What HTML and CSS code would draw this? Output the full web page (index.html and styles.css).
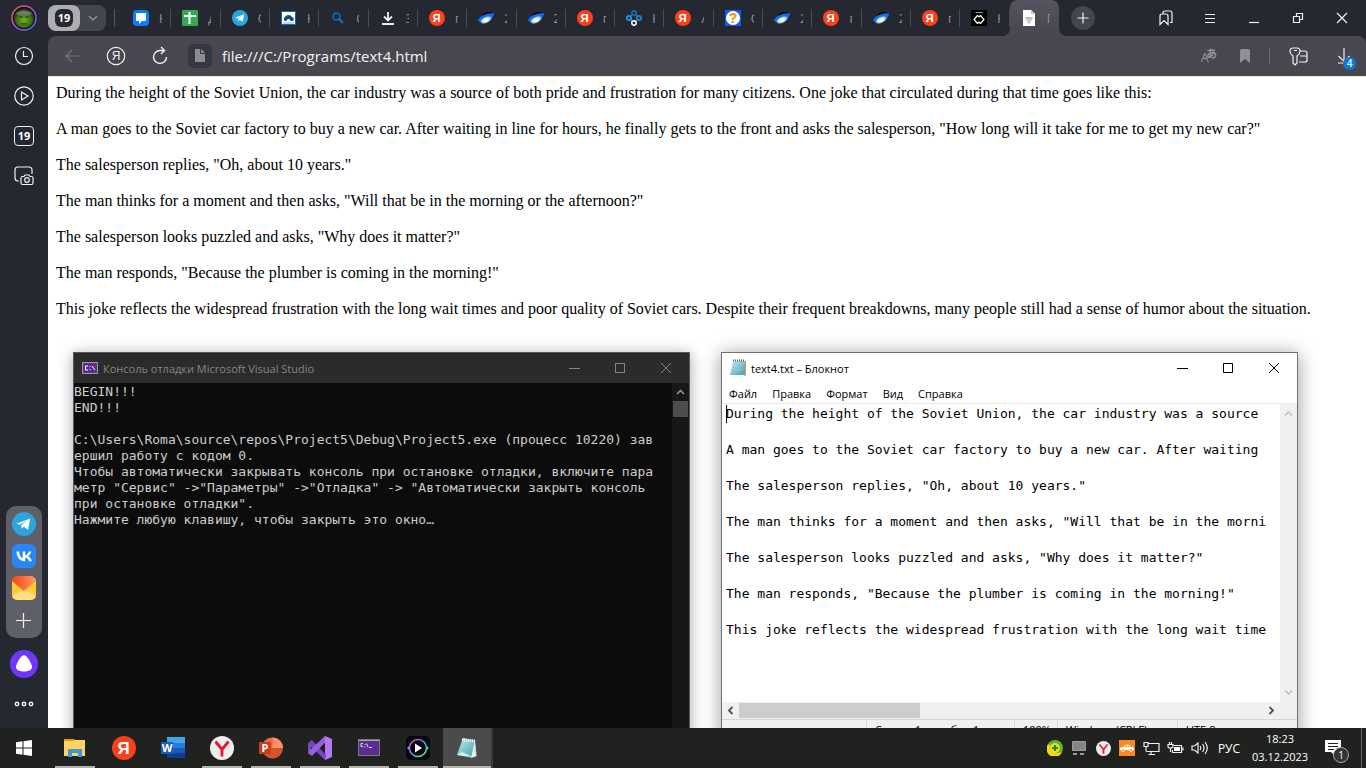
FILE: index.html
```html
<!DOCTYPE html>
<html lang="ru">
<head>
<meta charset="utf-8">
<title>text4.html</title>
<link rel="stylesheet" href="styles.css">
</head>
<body>
<svg class="defs" aria-hidden="true">
  <defs>
    <linearGradient id="ring" x1="0" y1="0" x2="1" y2="1"><stop offset="0" stop-color="#ff5a3c"/><stop offset=".4" stop-color="#c74be0"/><stop offset="1" stop-color="#3a6cff"/></linearGradient>
    <radialGradient id="avatar" cx=".5" cy=".6" r=".6"><stop offset="0" stop-color="#78b11c"/><stop offset=".55" stop-color="#3f7a14"/><stop offset="1" stop-color="#15260e"/></radialGradient>
    <linearGradient id="flap" x1="0" y1="0" x2="1" y2="0"><stop offset="0" stop-color="#ff3d10"/><stop offset="1" stop-color="#ff9b66"/></linearGradient>
    <radialGradient id="glow" cx=".5" cy=".5" r=".5"><stop offset="0" stop-color="#fff"/><stop offset=".5" stop-color="#e3f1ff"/><stop offset="1" stop-color="#fff" stop-opacity="0"/></radialGradient>
    <linearGradient id="rainbow" x1="0" y1="0" x2="1" y2="1"><stop offset="0" stop-color="#ff4fb0"/><stop offset=".35" stop-color="#a95cff"/><stop offset=".6" stop-color="#2fc4ff"/><stop offset="1" stop-color="#9bea3c"/></linearGradient>
    <linearGradient id="pad" x1="0" y1="0" x2="1" y2="1"><stop offset="0" stop-color="#c9eef3"/><stop offset="1" stop-color="#3f9fb0"/></linearGradient>
    <symbol id="ya" viewBox="0 0 24 24"><circle cx="12" cy="12" r="12" fill="#fc3f1d"/><text x="11.5" y="18" text-anchor="middle" class="ya-letter" fill="#fff">Я</text></symbol>
    <symbol id="tg" viewBox="0 0 24 24"><circle cx="12" cy="12" r="12" fill="#2ba5dc"/><path d="M4.500 11.800 18.200 6.400 16 17.800l-4.200-3-2.100 2-.5-3.500 6-5-7.500 4.500z" fill="#fff"/></symbol>
    <symbol id="space" viewBox="0 0 16 16"><path d="M3 7C5 2 11 1 15 3l-2 4z" fill="#000"/><path d="M0 10.500C1 5.500 11 2.500 16 3.500 15.500 10.500 5 15.500 0 10.500z" fill="#0872f5"/><ellipse cx="8" cy="10" rx="6.500" ry="3.500" transform="rotate(-25 8 10)" fill="url(#glow)"/></symbol>
    <symbol id="yb" viewBox="0 0 24 24"><circle cx="12" cy="12" r="12" fill="#ededed"/><path d="M5.500 5.500 12 13.500l6.500-8M12 13v7.500" fill="none" stroke="#e31b2c" stroke-width="2.800"/></symbol>
    <symbol id="notes" viewBox="0 0 24 24"><path d="M20 5l2 15-4 2z" fill="#b59a62"/><path d="M8 2l12 2-3 18-15-3z" fill="url(#pad)"/><path d="M20 4l1 16-5 2z" fill="#e9f1f1"/><path d="M7 4l13 1" stroke="#eee" stroke-width="3" stroke-dasharray="1 1"/><path d="M2 19l5-3 11 5z" fill="#d5eff2"/></symbol>
  </defs>
</svg>

<div class="desktop">
  <div class="workspace">
    <div class="browser">
      <nav class="sidebar" aria-label="Боковая панель">
        <button class="side-btn avatar" aria-label="Профиль"><svg width="26" height="26" viewBox="0 0 26 26"><circle cx="13" cy="13" r="12" fill="#15170f" stroke="url(#ring)" stroke-width="1.500"/><circle cx="13" cy="13" r="10" fill="url(#avatar)"/><path d="M5 8q8-5 16 0l-2 2H7z" fill="#6d7a66"/><path d="M8 12h4M14 12h4M10 19h6" stroke="#1d3a0c" stroke-width="1.200"/></svg></button>
        <button class="side-btn" aria-label="История"><svg width="20" height="20" viewBox="0 0 20 20" class="line"><circle cx="10" cy="10" r="8.500"/><path d="M9.500 5v5.500H14"/></svg></button>
        <button class="side-btn" aria-label="Видео"><svg width="20" height="20" viewBox="0 0 20 20" class="line"><circle cx="10" cy="10" r="9.200"/><path d="M7.500 6v8l6.500-4z"/></svg></button>
        <button class="side-btn" aria-label="Вкладки"><span class="count">19</span></button>
        <button class="side-btn" aria-label="Скриншот"><svg width="20" height="20" viewBox="0 0 20 20" class="line"><path d="M5 15H3.500Q1 14.500 1 12V4q0-3 3-3h11q3 0 3 3v4"/><path d="M7 12q0-1.500 1.500-1.500h1.500l1-1.500h4l1 1.500h1.500q1.500 0 1.500 1.500v5q0 1.500-1.500 1.500h-9Q7 18.500 7 17z"/><circle cx="13" cy="14" r="2.300"/></svg></button>
        <div class="messengers">
          <button class="side-app" aria-label="Telegram"><svg width="24" height="24"><use href="#tg"/></svg></button>
          <button class="side-app" aria-label="ВКонтакте"><svg width="24" height="24" viewBox="0 0 24 24"><rect width="24" height="24" rx="6" fill="#2787f5"/><path d="M13 17.200C7.800 17.200 4.700 13.600 4.500 7.600h2.700c.1 4.400 2 6.200 3.500 6.600V7.600h2.500v3.800c1.500-.2 3.100-1.900 3.600-3.800h2.500c-.4 2.300-2.100 4-3.300 4.700 1.200.6 3.100 2 3.900 4.900h-2.700c-.6-1.800-2-3.200-4-3.400v3.400z" fill="#fff"/></svg></button>
          <button class="side-app" aria-label="Почта"><svg width="24" height="24" viewBox="0 0 24 24"><rect width="24" height="24" rx="6" fill="#ffcc33"/><path d="M0 20 12 13l12 7q-1 4-6 4H6q-5 0-6-4z" fill="#ffdf80"/><path d="M0 5q1-5 6-5h12q5 0 6 5L12 15z" fill="url(#flap)"/></svg></button>
          <button class="side-app" aria-label="Добавить"><svg width="24" height="24" viewBox="0 0 24 24" class="line"><path d="M11.500 5v15M4 12.500h15"/></svg></button>
        </div>
        <button class="side-btn alice" aria-label="Алиса"><svg width="28" height="28" viewBox="0 0 28 28"><circle cx="14" cy="14" r="14" fill="#7137f9"/><path d="M14 5c3 0 8 9 8 12 0 6-16 6-16 0 0-3 5-12 8-12z" fill="#fff"/></svg></button>
        <button class="side-btn" aria-label="Ещё"><svg width="20" height="6" viewBox="0 0 20 6" class="line dots"><circle cx="3" cy="3" r="1.700"/><circle cx="10" cy="3" r="1.700"/><circle cx="17" cy="3" r="1.700"/></svg></button>
      </nav>

      <div class="main">
        <header class="tabstrip">
          <div class="tab-group">
            <button class="group-count" aria-label="19 вкладок"><span>19</span></button>
            <button class="group-more" aria-label="Список"><svg width="10" height="6" viewBox="0 0 10 6"><path d="M1 1l4 4 4-4" fill="none" stroke="#919198" stroke-width="1.300"/></svg></button>
          </div>
          <div class="tabs">
            <button class="tab"><svg width="16" height="16" viewBox="0 0 16 16"><rect width="16" height="16" rx="4" fill="#0a7cff"/><path d="M4 3h8q1 0 1 1v6q0 1-1 1H9l-3 3v-3H4q-1 0-1-1V4q0-1 1-1z" fill="#fff"/></svg><span>Н</span></button>
            <button class="tab"><svg width="16" height="16" viewBox="0 0 16 16"><rect width="16" height="16" rx="1" fill="#34a853"/><path d="M7.500 2v12M2 6h12" stroke="#fff" stroke-width="2"/></svg><span>Д</span></button>
            <button class="tab"><svg width="16" height="16"><use href="#tg"/></svg><span>О</span></button>
            <button class="tab"><svg width="16" height="16" viewBox="0 0 16 16"><rect x=".5" y="1.500" width="14" height="13" fill="#fff" stroke="#1767b5"/><path d="M4 11a3 2.500 0 0 1 0-4 4 4 0 0 1 7 0 3 2.500 0 0 1 1 4H9.500a2 2 0 0 0-4 0z" fill="#17457f"/><path d="M2 13h11" stroke="#6ab5e8"/></svg><span>Н</span></button>
            <button class="tab"><svg width="16" height="16" viewBox="0 0 16 16"><circle cx="6.500" cy="6.500" r="3.500" fill="none" stroke="#0b74c8" stroke-width="1.600"/><path d="M9 9l4 4" stroke="#0b74c8" stroke-width="2"/></svg><span>С</span></button>
            <button class="tab"><svg width="16" height="16" viewBox="0 0 16 16"><path d="M8 2v7M4 6.500l4 4 4-4M2 14h12" fill="none" stroke="#eee" stroke-width="1.800"/></svg><span>3</span></button>
            <button class="tab"><svg width="16" height="16"><use href="#ya"/></svg><span>п</span></button>
            <button class="tab"><svg width="16" height="16"><use href="#space"/></svg><span>2</span></button>
            <button class="tab"><svg width="16" height="16"><use href="#space"/></svg><span>2</span></button>
            <button class="tab"><svg width="16" height="16"><use href="#ya"/></svg><span>п</span></button>
            <button class="tab"><svg width="16" height="16" viewBox="0 0 16 16"><g fill="none" stroke-width="1.700"><path d="M6.500 4.500l-2 2M9.500 4.500l2 2M4.500 9.500l2 2M11.500 9.500l-2 2" stroke="#168bd0" stroke-width="1"/><circle cx="8" cy="3" r="2.200" stroke="#1768c2"/><circle cx="3" cy="8" r="2.200" stroke="#1aa0df"/><circle cx="13" cy="8" r="2.200" stroke="#1688e0"/><circle cx="8" cy="13" r="2.200" stroke="#eee"/></g></svg><span>Н</span></button>
            <button class="tab"><svg width="16" height="16"><use href="#ya"/></svg><span>А</span></button>
            <button class="tab"><svg width="16" height="16" viewBox="0 0 16 16"><rect width="16" height="16" fill="#0a5cff"/><circle cx="8" cy="8" r="7" fill="#fff"/><text x="8" y="13" text-anchor="middle" class="question">?</text></svg><span>О</span></button>
            <button class="tab"><svg width="16" height="16"><use href="#space"/></svg><span>2</span></button>
            <button class="tab"><svg width="16" height="16"><use href="#ya"/></svg><span>п</span></button>
            <button class="tab"><svg width="16" height="16"><use href="#space"/></svg><span>2</span></button>
            <button class="tab"><svg width="16" height="16"><use href="#ya"/></svg><span>п</span></button>
            <button class="tab"><svg width="16" height="16" viewBox="0 0 16 16"><rect width="16" height="16" fill="#000"/><path d="M4.500 2.500h7" stroke="#999"/><path d="M6.500 5.500 3 9.500l3.500 4M9.500 5.500l3.500 4-3.500 4M6.500 5.500 8 7l1.500-1.500M6.500 13.500 8 12l1.500 1.500" fill="none" stroke="#fff" stroke-width="1.200"/></svg><span>Н</span></button>
            <button class="tab active"><svg width="16" height="16" viewBox="0 0 16 16"><path d="M2 0h8l4 4v12H2z" fill="#fff"/><path d="M10 0v4h4z" fill="#c9c9c9"/><path d="M4.500 7.500h7L8 13.500zM6.500 8.500h3L8 11z" fill="none" stroke="#b5b5b5"/></svg><span>П</span></button>
          </div>
          <div class="window-tools">
            <button class="new-tab" aria-label="Новая вкладка"><svg width="12" height="12" viewBox="0 0 12 12" class="line"><path d="M6 .5v11M.5 6h11"/></svg></button>
            <button class="tool" aria-label="Закладки"><svg width="14" height="16" viewBox="0 0 14 16" class="line"><path d="M1 14.500V6q0-2 2-2h4q2 0 2 2v8.500l-4-4zM4 4V3q0-2 2-2h5q2 0 2 2v9.500h-2"/></svg></button>
            <button class="tool" aria-label="Меню"><svg width="10" height="11" viewBox="0 0 10 11" class="line"><path d="M0 1.500h10M0 5.500h10M0 9.500h10"/></svg></button>
            <button class="tool" aria-label="Свернуть"><svg width="10" height="11" viewBox="0 0 10 11" class="line"><path d="M0 9.500h10"/></svg></button>
            <button class="tool" aria-label="Восстановить"><svg width="12" height="12" viewBox="0 0 12 12" class="line"><path d="M1.500 4.500h6v6h-6zM4.500 4.500v-3h6v6h-3"/></svg></button>
            <button class="tool" aria-label="Закрыть"><svg width="12" height="12" viewBox="0 0 12 12" class="line"><path d="M1 1l10 10M11 1 1 11"/></svg></button>
          </div>
        </header>

        <div class="toolbar">
          <button class="nav-btn" aria-label="Назад"><svg width="16" height="14" viewBox="0 0 16 14" fill="none" stroke="#77767e" stroke-width="1.200"><path d="M15 7H2M8 1 2 7l6 6"/></svg></button>
          <button class="nav-btn" aria-label="Яндекс"><svg width="20" height="20" viewBox="0 0 20 20" class="line"><circle cx="10" cy="10" r="8.700"/></svg><span class="ya-outline">Я</span></button>
          <button class="nav-btn" aria-label="Обновить"><svg width="18" height="20" viewBox="0 0 18 20" class="line reload"><path d="M15.500 11A6.500 6.500 0 1 1 9 4.500h4M10 1l3.500 3.500L10 8"/></svg></button>
          <span class="page-badge"><svg width="12" height="14" viewBox="0 0 12 14"><path d="M1 0h5v5h5v8H1zM7 0l4 4H7z" fill="#8a8d94"/></svg></span>
          <input class="address" aria-label="Адрес" value="file:///C:/Programs/text4.html">
          <button class="nav-icon" aria-label="Перевести"><svg width="18" height="16" viewBox="0 0 18 16"><text x="1" y="14" class="tr-a">A</text><text x="6" y="10" class="tr-b">あ</text></svg></button>
          <button class="nav-icon" aria-label="В закладки"><svg width="10" height="14" viewBox="0 0 10 14"><path d="M0 2q0-2 2-2h6q2 0 2 2v12L5 10l-5 4z" fill="#918f96"/></svg></button>
          <span class="divider"></span>
          <button class="nav-icon key" aria-label="Пароли"><svg width="19" height="19" viewBox="0 0 19 19" class="line"><path d="M4 9Q1 7 1 4.500 1 1 4 1h4q3 0 3 3.500Q11 7 8 9v7l-2 2-2-2zM5 3.500h3M11 4h5q2 0 2 2v7q0 2-2 2h-6M11 9h7"/></svg></button>
          <button class="nav-icon download" aria-label="Загрузки"><svg width="16" height="18" viewBox="0 0 16 18" class="line"><path d="M8 1v13M2.500 9 8 14.500 13.500 9M2 16h6"/></svg><span class="badge">4</span></button>
        </div>

        <main class="page">
          During the height of the Soviet Union, the car industry was a source of both pride and frustration for many citizens. One joke that circulated during that time goes like this:<br><br>
          A man goes to the Soviet car factory to buy a new car. After waiting in line for hours, he finally gets to the front and asks the salesperson, "How long will it take for me to get my new car?"<br><br>
          The salesperson replies, "Oh, about 10 years."<br><br>
          The man thinks for a moment and then asks, "Will that be in the morning or the afternoon?"<br><br>
          The salesperson looks puzzled and asks, "Why does it matter?"<br><br>
          The man responds, "Because the plumber is coming in the morning!"<br><br>
          This joke reflects the widespread frustration with the long wait times and poor quality of Soviet cars. Despite their frequent breakdowns, many people still had a sense of humor about the situation.
        </main>
      </div>
    </div>

    <section class="window console" aria-label="Консоль отладки">
      <div class="titlebar">
        <svg width="16" height="12" viewBox="0 0 16 12"><rect x=".5" y=".5" width="15" height="11" fill="#5c2d91" stroke="#9b9b9b"/><path d="M6 4H3.500v4H6M8 4v1M8 7v1M10 4l3 4" fill="none" stroke="#fff"/></svg>
        <h2 class="title">Консоль отладки Microsoft Visual Studio</h2>
        <button class="win-btn" aria-label="Свернуть"><svg width="12" height="12" viewBox="0 0 12 12"><path d="M1 6.500h11"/></svg></button>
        <button class="win-btn" aria-label="Развернуть"><svg width="12" height="12" viewBox="0 0 12 12"><path d="M1.500 1.500h9v9h-9z"/></svg></button>
        <button class="win-btn" aria-label="Закрыть"><svg width="12" height="12" viewBox="0 0 12 12"><path d="M1 1l10 10M11 1 1 11"/></svg></button>
      </div>
      <div class="console-body">
<pre class="output">BEGIN!!!
END!!!

C:\Users\Roma\source\repos\Project5\Debug\Project5.exe (процесс 10220) зав
ершил работу с кодом 0.
Чтобы автоматически закрывать консоль при остановке отладки, включите пара
метр "Сервис" -&gt;"Параметры" -&gt;"Отладка" -&gt; "Автоматически закрыть консоль
при остановке отладки".
Нажмите любую клавишу, чтобы закрыть это окно…</pre>
        <div class="console-scroll"><svg width="9" height="6" viewBox="0 0 9 6"><path d="M1 5l3.500-3.500L8 5" fill="none" stroke="#999" stroke-width="1.500"/></svg><span class="thumb"></span></div>
      </div>
    </section>

    <section class="window notepad" aria-label="Блокнот">
      <div class="titlebar">
        <svg width="16" height="18" viewBox="0 0 16 18"><path d="M13 2h3v14l-2 1z" fill="#b59a62"/><path d="M3 2h12l-1 14H0z" fill="url(#pad)"/><path d="M3 5h10M3 8h10M2 11h10" stroke="#8fcfda" stroke-width=".7"/><path d="M3 1.500h12" stroke="#56656a" stroke-width="2" stroke-dasharray="1 1"/></svg>
        <h2 class="title">text4.txt – Блокнот</h2>
        <button class="win-btn" aria-label="Свернуть"><svg width="12" height="12" viewBox="0 0 12 12"><path d="M1 6.500h11"/></svg></button>
        <button class="win-btn" aria-label="Развернуть"><svg width="12" height="12" viewBox="0 0 12 12"><path d="M1.500 1.500h9v9h-9z"/></svg></button>
        <button class="win-btn" aria-label="Закрыть"><svg width="12" height="12" viewBox="0 0 12 12"><path d="M1 1l10 10M11 1 1 11"/></svg></button>
      </div>
      <div class="menubar"><button>Файл</button><button>Правка</button><button>Формат</button><button>Вид</button><button>Справка</button></div>
      <div class="editor-row">
        <textarea class="editor" aria-label="Текст" wrap="off" spellcheck="false">During the height of the Soviet Union, the car industry was a source

A man goes to the Soviet car factory to buy a new car. After waiting

The salesperson replies, "Oh, about 10 years."

The man thinks for a moment and then asks, "Will that be in the morni

The salesperson looks puzzled and asks, "Why does it matter?"

The man responds, "Because the plumber is coming in the morning!"

This joke reflects the widespread frustration with the long wait time</textarea>
        <span class="caret"></span>
        <div class="vscroll"><svg width="9" height="7" viewBox="0 0 9 7"><path d="M1 5.500 4.500 2 8 5.500"/></svg><svg width="9" height="7" viewBox="0 0 9 7"><path d="M1 1.500 4.500 5 8 1.500"/></svg></div>
      </div>
      <div class="hscroll"><svg width="7" height="9" viewBox="0 0 7 9"><path d="M5.500 1 2 4.500 5.500 8"/></svg><span class="thumb"></span><svg width="7" height="9" viewBox="0 0 7 9"><path d="M1.500 1 5 4.500 1.500 8"/></svg></div>
      <div class="statusbar"><span class="pos">Строка 1, столбец 1</span><span class="zoom">100%</span><span class="eol">Windows (CRLF)</span><span class="enc">UTF-8</span></div>
    </section>
  </div>

  <footer class="taskbar">
    <button class="start" aria-label="Пуск"><svg width="16" height="16" viewBox="0 0 16 16"><path d="M0 2.200 6.500 1.300v6.200H0zM7.500 1.200 16 0v7.500H7.500zM0 8.500h6.500v6.200L0 13.800zM7.500 8.500H16V16l-8.500-1.200z" fill="#fff"/></svg></button>
    <div class="tasks">
      <button class="task open" aria-label="Проводник"><svg width="24" height="24" viewBox="0 0 24 24"><path d="M1 3h9l2 1h10v16H1z" fill="#ffd45e"/><path d="M1 3h9l1 2H1z" fill="#e5a000"/><path d="M5 21v-8h14v8h-4v-4H9v4z" fill="#3b99db"/></svg></button>
      <button class="task" aria-label="Яндекс"><svg width="24" height="24"><use href="#ya"/></svg></button>
      <button class="task" aria-label="Word"><svg width="24" height="24" viewBox="0 0 24 24"><path d="M6 1h18v6H6z" fill="#41a5ee"/><path d="M6 7h18v5H6z" fill="#2b7cd3"/><path d="M6 12h18v5H6z" fill="#185abd"/><path d="M6 17h18v5H6z" fill="#103f91"/><rect y="6" width="12" height="12" fill="#185abd"/><text x="6" y="16" text-anchor="middle" class="office">W</text></svg></button>
      <button class="task open" aria-label="Яндекс Браузер"><svg width="24" height="24"><use href="#yb"/></svg></button>
      <button class="task open" aria-label="PowerPoint"><svg width="24" height="24" viewBox="0 0 24 24"><circle cx="13.500" cy="12" r="10.500" fill="#d35230"/><path d="M13.500 1.500A10.500 10.500 0 0 0 3 12h10.500z" fill="#ed6c47"/><path d="M13.500 1.500V12H24A10.500 10.500 0 0 0 13.500 1.500z" fill="#ff8f6b"/><rect y="6" width="12" height="12" fill="#c43e1c"/><text x="6" y="16" text-anchor="middle" class="office">P</text></svg></button>
      <button class="task open" aria-label="Visual Studio"><svg width="24" height="24" viewBox="0 0 24 24"><path d="M17 0l7 3v18l-7 3z" fill="#b179f1"/><path d="M1 6l3-2 14 15-1 5L1 9z" fill="#7b3fc4"/><path d="M0 7l3 1.500v8L0 18z" fill="#7252aa"/><path d="M17 0v6.500L4 20l-3-2v-3z" fill="#9a5ee0"/></svg></button>
      <button class="task open" aria-label="Консоль"><svg width="24" height="24" viewBox="0 0 24 24"><rect x="1.500" y="3.500" width="21" height="16" fill="#5c2d91" stroke="#777"/><path d="M2 4.500h20" stroke="#aaa"/><path d="M6 7.500H4v3h2M8 8v1M8 10.500v1M9.500 7.500l1.500 3.500M12 11.500h3" fill="none" stroke="#ddd"/></svg></button>
      <button class="task open" aria-label="Плеер"><svg width="24" height="24" viewBox="0 0 24 24"><rect width="24" height="24" rx="5" fill="#07070b"/><circle cx="12" cy="12" r="8.500" fill="none" stroke="url(#rainbow)" stroke-width="1.500"/><path d="M1 12l2-2v4zM23 12l-2-2v4z" fill="#41bde8"/><path d="M9 7.500v9l7-4.500z" fill="#fff"/></svg></button>
      <button class="task open current" aria-label="Блокнот"><svg width="24" height="24"><use href="#notes"/></svg></button>
    </div>
    <div class="tray">
      <button aria-label="Антивирус"><svg width="16" height="16" viewBox="0 0 16 16"><circle cx="8" cy="8" r="8" fill="#5cb531"/><path d="M1 4.500A8 8 0 1 0 15 12q-4 2-8 0T3 5z" fill="#f3d818"/><circle cx="8" cy="8" r="5" fill="#f3d818"/><path d="M8 5v6M5 8h6" stroke="#238a2c" stroke-width="2"/></svg></button>
      <button aria-label="Сенсорная панель"><svg width="16" height="16" viewBox="0 0 16 16"><path d="M1.500 1.500h13v9h-13z" fill="#858585" stroke="#999"/><path d="M2 14h4M9 14h4" stroke="#999" stroke-width="2"/></svg></button>
      <button aria-label="Браузер"><svg width="15" height="15"><use href="#yb"/></svg></button>
      <button aria-label="Такси"><svg width="16" height="16" viewBox="0 0 16 16"><rect width="16" height="16" fill="#f68a1f"/><path d="M1 9q0-2 3-2 2-3 5-2.500 2 0 3 2.500 3 0 3 2v1H1z" fill="#fff"/><path d="M5 7q2-2 3-1.500V7zM9 5.500q1.500 0 2 1.500H9z" fill="#f68a1f"/><circle cx="4" cy="10" r="1.500" fill="#f68a1f" stroke="#fff"/><circle cx="12" cy="10" r="1.500" fill="#f68a1f" stroke="#fff"/></svg></button>
      <button aria-label="Сеть"><svg width="17" height="16" viewBox="0 0 17 16" class="line"><path d="M5 3.500h11v8H3.500M8 12v3M5.500 14.500H12M1 2.500h4v4H1zM3 6.500v5"/></svg></button>
      <button aria-label="Батарея"><svg width="17" height="16" viewBox="0 0 17 16" class="line"><path d="M7 5.500h7.500v7h-9V10M16 7.500v3M1 4.500h5v2q0 1.500-2.500 1.500T1 6.500zM2.500 2v2M4.500 2v2M3.500 8v4"/><path d="M7 7h6v4H7z" fill="#fff" stroke="none"/></svg></button>
      <button aria-label="Звук"><svg width="17" height="16" viewBox="0 0 17 16" class="line"><path d="M1 6h2.500L7 3v10L3.500 10H1zM9 6q1.500 2 0 4M11.500 4q3 4 0 8M14 2q4.500 6 0 12"/></svg></button>
      <button class="lang">РУС</button>
      <button class="clock"><span>18:23</span><span>03.12.2023</span></button>
      <button class="notify" aria-label="Уведомления"><svg width="16" height="16" viewBox="0 0 16 16"><path d="M0 0h16v12h-6v4l-4-4H0z" fill="#fff"/><path d="M3 3.500h10M3 6.500h10M3 9.500h6" stroke="#222"/></svg><span class="badge">1</span></button>
    </div>
  </footer>
</div>
</body>
</html>
```

FILE: styles.css
```css
* { box-sizing: border-box; }

body {
  margin: 0;
  font-family: "Open Sans", "Noto Sans", sans-serif;
  font-size: 12px;
  overflow: hidden;
}

button {
  margin: 0;
  padding: 0;
  border: 0;
  background: none;
  color: inherit;
  font: inherit;
  display: flex;
  align-items: center;
  justify-content: center;
}

svg { display: block; flex: none; }
.defs { position: absolute; width: 0; height: 0; }
.line { fill: none; stroke: #f0f0f0; stroke-width: 1.2; }
.dots { stroke-width: 1.5; }
.reload { stroke-width: 1.4; }
.ya-letter { font: 700 17px "Liberation Sans", sans-serif; }
.question { font: 700 14px "Liberation Sans", sans-serif; fill: #ff8a00; }
.office { font: 700 11px "Open Sans", sans-serif; fill: #fff; }
.tr-a { font: 12px "Open Sans", sans-serif; fill: #99989f; }
.tr-b { font: 700 11px "Noto Sans CJK JP", sans-serif; fill: #99989f; }

.desktop { height: 100vh; display: flex; flex-direction: column; }
.workspace { position: relative; flex: 1; min-height: 0; overflow: hidden; }
.browser { display: flex; height: 100%; background: #252731; }

/* Sidebar */
.sidebar {
  flex: none;
  width: 48px;
  display: flex;
  flex-direction: column;
  align-items: center;
}
.side-btn { width: 48px; height: 40px; }
.side-btn.avatar { height: 36px; }
.count {
  width: 20px;
  height: 20px;
  border: 1px solid #f0f0f0;
  border-radius: 4px;
  color: #fff;
  font-size: 11px;
  font-weight: 700;
  line-height: 18px;
  text-align: center;
}
.messengers {
  margin-top: auto;
  width: 36px;
  padding: 6px;
  display: flex;
  flex-direction: column;
  gap: 8px;
  border-radius: 10px;
  background: #5f5f68;
}
.side-btn.alice { height: 52px; }
.side-btn:last-child { margin-bottom: 10px; height: 28px; }

/* Tabs */
.main { flex: 1; min-width: 0; display: flex; flex-direction: column; }
.tabstrip { flex: none; height: 36px; display: flex; align-items: center; }
.tab-group {
  flex: none;
  width: 58px;
  height: 26px;
  display: flex;
  border-radius: 8px;
  background: #454550;
}
.group-count { width: 32px; height: 26px; border-radius: 8px; background: #aeaeb2; }
.group-count span {
  width: 18px;
  height: 18px;
  border-radius: 6px;
  background: #252731;
  color: #fff;
  font-size: 11px;
  font-weight: 700;
  line-height: 18px;
}
.group-more { flex: 1; }
.tabs { flex: 1; min-width: 0; height: 36px; margin-left: 8px; padding-left: 8px; display: flex; position: relative; }
.tabs::before { content: ""; position: absolute; left: 0; top: 9px; width: 1px; height: 18px; background: #565861; }
.tab {
  position: relative;
  flex: 1 1 0;
  min-width: 0;
  padding-left: 11px;
  justify-content: flex-start;
  gap: 10px;
  color: #94949a;
}
.tab span { width: 3px; overflow: hidden; text-align: left; }
.tab::after { content: ""; position: absolute; right: 0; top: 9px; width: 1px; height: 18px; background: #4a4c55; }
.tab.active { border-radius: 8px 8px 0 0; background: linear-gradient(#55545e, #484750); }
.tab.active::before, .tab.active::after {
  content: "";
  position: absolute;
  top: auto;
  bottom: 0;
  width: 8px;
  height: 8px;
}
.tab.active::before { left: -8px; background: radial-gradient(circle at 0 0, transparent 8px, #484750 8px); }
.tab.active::after { right: -8px; background: radial-gradient(circle at 100% 0, transparent 8px, #484750 8px); }
.window-tools { flex: none; display: flex; align-items: center; padding: 0 2px 0 12px; }
.new-tab { width: 24px; height: 24px; border-radius: 50%; background: #454550; margin-right: 49px; }
.tool { width: 44px; height: 36px; }

/* Address bar */
.toolbar {
  flex: none;
  height: 40px;
  padding-left: 2px;
  display: flex;
  align-items: center;
  border-radius: 8px 8px 0 0;
  background: #484750;
  color: #f0f0f0;
}
.nav-btn { position: relative; width: 44px; height: 40px; }
.ya-outline { position: absolute; inset: 0; font: 12px/40px "Liberation Sans", sans-serif; text-align: center; }
.page-badge {
  width: 24px;
  height: 24px;
  margin-left: 6px;
  display: flex;
  align-items: center;
  justify-content: center;
  border-radius: 5px;
  background: #363841;
}
.address {
  flex: 1;
  min-width: 0;
  height: 32px;
  padding: 0 10px;
  border: 0;
  outline: 0;
  background: none;
  color: #f3f3f3;
  font: 15px "Open Sans", sans-serif;
}
.nav-icon { position: relative; width: 36px; height: 40px; }
.divider { width: 1px; height: 16px; margin: 0 4px 0 6px; background: #6c6b73; }
.key { width: 48px; }
.download { width: 44px; }
.badge {
  position: absolute;
  border-radius: 50%;
  color: #fff;
  text-align: center;
}
.download .badge { right: 10px; bottom: 6px; width: 13px; height: 13px; background: #0a78dd; font-size: 10px; line-height: 13px; font-weight: 600; }

.page {
  flex: 1;
  min-height: 0;
  padding: 7px 8px;
  border-top: 1px solid #e6e6ea;
  background: #fff;
  color: #000;
  font: 16px/18px "Liberation Serif", "Times New Roman", serif;
}

/* Floating windows */
.window { position: absolute; top: 352px; display: flex; flex-direction: column; }
.titlebar { flex: none; height: 30px; display: flex; align-items: center; }
.title { flex: 1; margin: 0; font-size: 11px; font-weight: 400; }
.win-btn { width: 46px; height: 30px; }
.win-btn svg { fill: none; stroke: currentColor; stroke-width: 1; }
.titlebar .win-btn { margin-left: -5px; }
.titlebar .title + .win-btn { margin-left: 0; }

.console {
  left: 73px;
  width: 617px;
  bottom: -20px;
  border: 1px solid #5a5a5a;
  background: #0c0c0c;
  color: #ccc;
  box-shadow: 0 2px 14px rgba(0, 0, 0, .35);
}
.console .titlebar { padding-left: 8px; gap: 5px; background: #2b2b2b; color: #858585; }
.console-body { flex: 1; min-height: 0; display: flex; justify-content: space-between; }
.output { margin: 0; padding-top: 1px; font: 13px/16px "DejaVu Sans Mono", monospace; }
.console-scroll { flex: none; width: 17px; display: flex; flex-direction: column; align-items: center; padding-top: 6px; gap: 6px; background: #171717; }
.console-scroll .thumb { width: 15px; height: 16px; background: #4d4d4d; }

.notepad {
  left: 721px;
  width: 577px;
  bottom: -14px;
  border: 1px solid #707070;
  background: #fff;
  color: #000;
  box-shadow: 0 2px 18px rgba(0, 0, 0, .4);
}
.notepad .titlebar { padding-left: 8px; gap: 5px; }
.menubar { flex: none; height: 21px; padding-left: 7px; display: flex; gap: 15px; font-size: 11px; border-bottom: 1px solid #ececec; }
.editor-row { position: relative; flex: 1; min-height: 0; display: flex; }
.editor {
  flex: 1;
  min-width: 0;
  padding: 1px 0 0 4px;
  border: 0;
  outline: 0;
  resize: none;
  overflow: hidden;
  background: #fff;
  color: #000;
  font: 13px/18px "DejaVu Sans Mono", monospace;
}
.caret { position: absolute; left: 4px; top: 1px; width: 1px; height: 18px; background: #000; }
.vscroll { flex: none; width: 17px; padding: 6px 0; display: flex; flex-direction: column; justify-content: space-between; align-items: center; background: #f0f0f0; }
.vscroll svg { fill: none; stroke: #bfbfbf; stroke-width: 1.5; }
.hscroll { flex: none; height: 17px; padding: 0 22px 1px 5px; display: flex; align-items: center; gap: 5px; background: #f0f0f0; }
.hscroll svg { fill: none; stroke: #505050; stroke-width: 1.8; }
.hscroll .thumb { width: 33%; height: 15px; background: #cdcdcd; margin-right: auto; }
.statusbar { flex: none; height: 22px; padding-top: 1px; border-top: 1px solid #d7d7d7; display: flex; justify-content: flex-end; background: #f0f0f0; font-size: 11px; line-height: 18px; }
.statusbar span { padding-left: 8px; border-left: 1px solid #d7d7d7; }
.pos { width: 148px; }
.zoom { width: 43px; }
.eol { width: 120px; }
.enc { width: 120px; }

/* Taskbar */
.taskbar { position: relative; flex: none; height: 40px; display: flex; background: #20221f; color: #fff; }
.start { width: 48px; height: 40px; }
.tasks { margin-left: 3px; display: flex; gap: 1px; }
.task { position: relative; width: 48px; height: 40px; }
.task.open::after { content: ""; position: absolute; left: 4px; right: 4px; bottom: 0; height: 2px; background: #b5b3ae; }
.task.current { background: #4b4b4b; box-shadow: 2px 0 0 #3a3a3a; }
.task.current::after { left: 0; right: 0; }
.tray { margin-left: auto; display: flex; padding-right: 4px; }
.tray button { width: 24px; height: 40px; }
.tray .lang { width: 36px; }
.tray .clock { width: 66px; flex-direction: column; line-height: 18px; font-size: 11px; }
.tray .notify { position: relative; width: 49px; border-right: 1px solid #666; padding-right: 8px; }
.tray .notify .badge { right: 12px; bottom: 5px; width: 16px; height: 16px; border: 1px solid #aaa; background: #333; font-size: 10px; line-height: 14px; }
```
